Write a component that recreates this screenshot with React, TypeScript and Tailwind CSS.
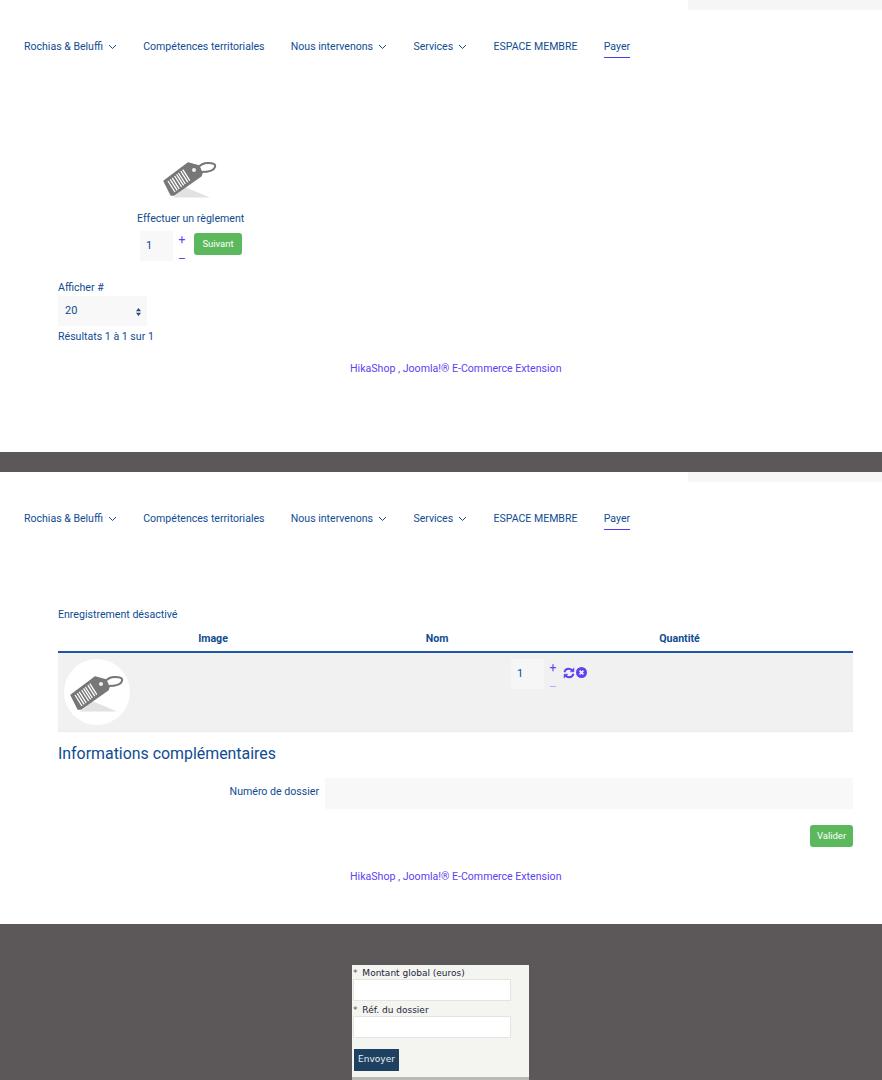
const font = "font-['Roboto',sans-serif]";

const Chevron = () => (
  <svg width="9" height="6" viewBox="0 0 9 6" fill="none" stroke="#0f4c92" strokeWidth="1" className="ml-[5px]">
    <path d="M1 1l3.5 3.5L8 1" />
  </svg>
);

const navItems = [
  { label: 'Rochias & Beluffi', menu: true },
  { label: 'Compétences territoriales' },
  { label: 'Nous intervenons', menu: true },
  { label: 'Services', menu: true },
  { label: 'ESPACE MEMBRE' },
  { label: 'Payer', active: true },
];

const Header = () => (
  <div className="h-[66px] shrink-0">
    <div className="ml-[688px] h-[10px] bg-[#f6f6f6]" />
    <nav className="flex gap-[26.3px] pl-6 pt-[29px] text-[10.55px] leading-4 text-[#0f4c92]">
      {navItems.map((item) => (
        <div
          key={item.label}
          className={`flex h-[19px] items-center pb-[3px] ${item.active ? 'border-b border-[#4f3cf0]' : ''}`}
        >
          {item.label}
          {item.menu && <Chevron />}
        </div>
      ))}
    </nav>
  </div>
);

// barcode price tag, same drawing on both pages
const PriceTag = () => (
  <svg width="56" height="38" viewBox="0 0 56 38">
    <path d="M22 25l25 10.5H10z" fill="#e2e2e2" />
    <path d="M35 6c2-3 5-5 10-5 5 0 8 1 7 4-1 4-6 5-14 5" fill="none" stroke="#777" strokeWidth="2" />
    <path d="M1 19L25 1l11 3 3 7-1 3L11 33l-3 0z" fill="#777" stroke="#777" strokeWidth="1.4" strokeLinejoin="round" />
    <circle cx="31" cy="8" r="2" fill="#f1f1f1" />
    <path
      d="M5 19l7 11M7.2 17.3l7 11M9.2 15.8l7 11M11.6 14l7 11M13.6 12.4l7 11M15.4 11l7 11M17.8 9.2l7 11M19.8 7.6l7 11"
      stroke="#fff"
      strokeWidth="1.3"
    />
  </svg>
);

const QtyButtons = ({ minus }: { minus: string }) => (
  <div className="flex w-[18px] flex-col items-center text-[12px] leading-none">
    <span className="text-[#5b42f3]">+</span>
    <span className={`mt-[7px] ${minus}`}>–</span>
  </div>
);

const Credit = ({ className }: { className: string }) => (
  <div className={`ml-[350px] text-[10.6px] leading-4 text-[#5b42f3] ${className}`}>
    HikaShop , Joomla!® E-Commerce Extension
  </div>
);

const ListingPage = () => (
  <section className="flex h-[452px] flex-col">
    <Header />
    <div className="ml-[137px] mt-[96px] w-[108px]">
      <div className="flex justify-center">
        <PriceTag />
      </div>
      <div className="mt-[11px] whitespace-nowrap text-[10.6px] leading-4">Effectuer un règlement</div>
      <div className="mt-[4px] ml-[3px] flex">
        <div className="flex h-[30px] w-[33px] items-center bg-[#f8f8f8] pl-[6px] pt-px text-[11px]">1</div>
        <div className="mt-[3px]">
          <QtyButtons minus="text-[#5b42f3]" />
        </div>
        <div className="ml-[3px] mt-[2px] flex h-[22px] w-12 items-center justify-center rounded-[3px] bg-[#5cb85c] text-[9.5px] text-white">
          Suivant
        </div>
      </div>
    </div>
    <div className="ml-[58px] mt-[15px] text-[10.6px] leading-4">Afficher #</div>
    <div className="ml-[58px] flex h-[30px] w-[89px] items-center justify-between bg-[#f8f8f8] pl-[7px] pr-[6px] pt-px text-[11px]">
      20
      <svg width="5" height="8" viewBox="0 0 5 8" fill="#2f4a78">
        <path d="M2.5 0L5 3.2H0zM2.5 8L0 4.8h5z" />
      </svg>
    </div>
    <div className="ml-[58px] mt-[3px] text-[10.6px] leading-4">Résultats 1 à 1 sur 1</div>
    <Credit className="mt-[16px]" />
  </section>
);

const CartPage = () => (
  <section className="flex h-[452px] flex-col">
    <Header />
    <div className="mx-[29px] ml-[58px] mt-[69px]">
      <div className="text-[10.6px] leading-4">Enregistrement désactivé</div>
      <div className="mt-[3px] grid h-[27px] grid-cols-[310px_138px_1fr] items-center border-b-2 border-[#1f55a5] text-center text-[10.6px] font-bold">
        <div>Image</div>
        <div>Nom</div>
        <div>Quantité</div>
      </div>
      <div className="grid h-[79px] grid-cols-[448px_1fr] border-b border-[#ececec] bg-[#f1f1f1] pt-[6px]">
        <div className="pl-[6px]">
          <div className="flex h-[66px] w-[66px] items-center justify-center rounded-full bg-white pl-[2px] pt-[5px]">
            <PriceTag />
          </div>
        </div>
        <div className="flex pl-[5px]">
          <div className="flex h-[30px] w-[33px] items-center bg-[#f6f6f6] pl-[6px] pt-px text-[11px]">1</div>
          <div className="mt-[3px]">
            <QtyButtons minus="text-[#b5aef2]" />
          </div>
          <div className="ml-px mt-[8px] flex h-3 items-start gap-px">
            <svg width="12" height="12" viewBox="0 0 12 12" fill="none" stroke="#5b42f3" strokeWidth="1.9">
              <path d="M1.5 5.2C2 3 3.8 1.8 5.8 1.8c1.7 0 3 .8 3.9 2.1" />
              <path d="M10.5 6.8c-.5 2.2-2.3 3.4-4.3 3.4-1.7 0-3-.8-3.9-2.1" />
              <path d="M11 .8v4H7M1 11.2v-4h4" fill="#5b42f3" strokeWidth="0.5" />
            </svg>
            <svg width="11" height="11" viewBox="0 0 11 11">
              <circle cx="5.5" cy="5.5" r="5.5" fill="#5b42f3" />
              <path d="M3.6 3.6l3.8 3.8M7.4 3.6L3.6 7.4" stroke="#f1f1f1" strokeWidth="1.7" />
            </svg>
          </div>
        </div>
      </div>
      <h2 className="mt-[10px] text-[15.9px] leading-6">Informations complémentaires</h2>
      <div className="mt-[12px] flex items-start">
        <div className="w-[261px] pt-[6px] text-right text-[10.6px] leading-4">Numéro de dossier</div>
        <div className="ml-[6px] h-[31px] flex-1 bg-[#f8f8f8]" />
      </div>
      <div className="mt-[16px] flex justify-end">
        <div className="flex h-[22px] w-[43px] items-center justify-center rounded-[3px] bg-[#5cb85c] text-[9.5px] text-white">
          Valider
        </div>
      </div>
    </div>
    <Credit className="mt-[22px]" />
  </section>
);

const PaymentForm = () => (
  <footer className="flex h-[156px] justify-center overflow-hidden bg-[#5c5859] pt-[41px]">
    <div className="-ml-[1px] h-[115px] w-[177px] border-b-[3px] border-[#b9b9b5] bg-[#f4f4f0] pl-px font-['DejaVu_Sans',sans-serif] text-[9px] text-[#1d1d3a]">
      <div className="h-[14px] pt-[2px] leading-3">
        <span className="mr-[2px] text-[#555]">*</span> Montant global (euros)
      </div>
      <div className="h-[22px] w-[158px] border border-[#e4e4e0] bg-white" />
      <div className="mt-[1px] h-[14px] pt-[2px] leading-3">
        <span className="mr-[2px] text-[#555]">*</span> Réf. du dossier
      </div>
      <div className="h-[22px] w-[158px] border border-[#e4e4e0] bg-white" />
      <div className="ml-px mt-[11px] flex h-[22px] w-[45px] items-center justify-center bg-[#1f4161] text-[#e8edf2]">
        Envoyer
      </div>
    </div>
  </footer>
);

export default function App() {
  return (
    <div className={`${font} h-[1080px] overflow-hidden bg-white text-[#0f4c92]`}>
      <ListingPage />
      <div className="h-5 bg-[#5c5859]" />
      <CartPage />
      <PaymentForm />
    </div>
  );
}
